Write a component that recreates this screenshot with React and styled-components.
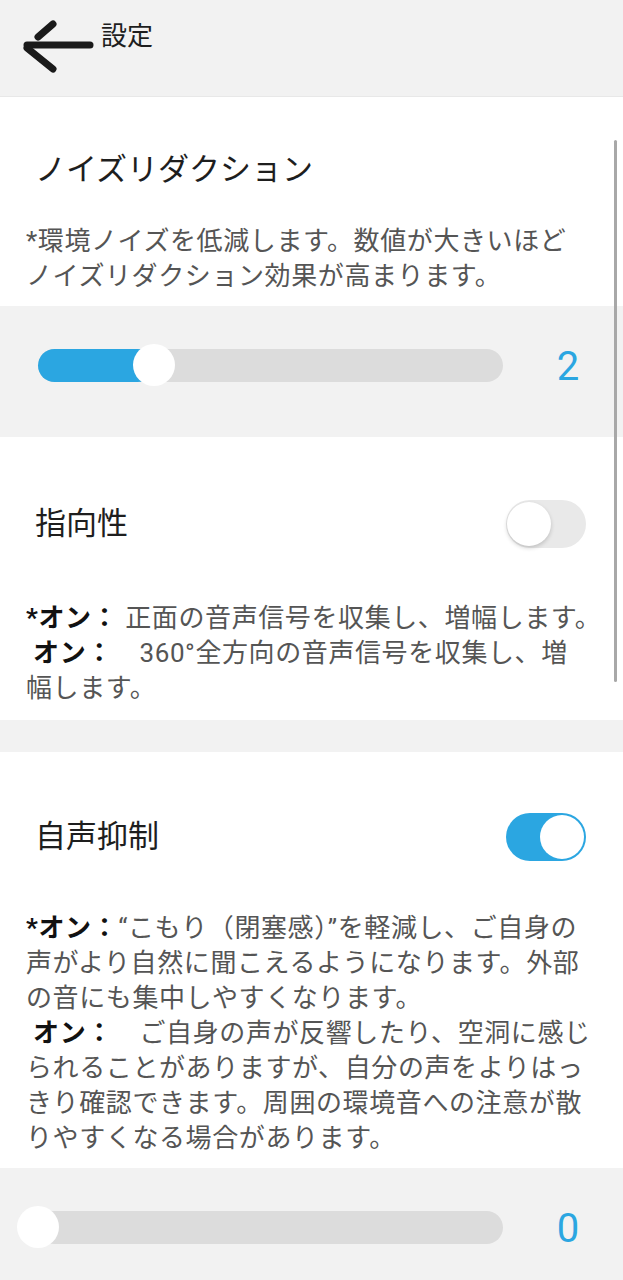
import { useState } from "react"
import styled, { createGlobalStyle } from "styled-components"

const GlobalStyle = createGlobalStyle`
  body {
    margin: 0;
    background: #f2f2f2;
    font-family: Roboto, "Noto Sans CJK JP", sans-serif;
  }
`

const Page = styled.div`
  position: relative;
  width: 623px;
  overflow: hidden;
`

const Header = styled.div`
  display: flex;
  align-items: flex-start;
  height: 97px;
  padding: 18px 0 0 20px;
  box-sizing: border-box;
  background: #f2f2f2;
  border-bottom: 1px solid #e8e8e8;
`

const BackIcon = styled.svg`
  width: 75px;
  height: 56px;
  flex-shrink: 0;
`

const HeaderTitle = styled.span`
  margin: 5px 0 0 6px;
  font-size: 26px;
  line-height: 1;
  color: #1e1e1e;
`

const Section = styled.div`
  background: #fff;
  padding: ${(p) => p.$top}px 20px ${(p) => p.$bottom}px 26px;
  margin-top: ${(p) => p.$gap || 0}px;
`

const Title = styled.div`
  margin-left: 9px;
  font-size: 31px;
  line-height: 40px;
  color: #1e1e1e;
`

const TitleRow = styled.div`
  display: flex;
  align-items: center;
  justify-content: space-between;
  height: 48px;
  padding-right: 17px;
`

const Desc = styled.div`
  margin-top: ${(p) => p.$gap}px;
  font-size: 26px;
  line-height: 35px;
  letter-spacing: 0.6px;
  color: #555;
`

const Para = styled.p`
  margin: 0;
`

const Label = styled.b`
  color: #111;
  font-weight: 700;
`

const Band = styled.div`
  display: flex;
  align-items: center;
  padding: 41px 25px 54px 38px;
  background: #f2f2f2;
`

const Track = styled.div`
  position: relative;
  width: 465px;
  height: 33px;
  border-radius: 17px;
  background: #dcdcdc;
`

const Fill = styled.div`
  height: 100%;
  border-radius: 17px;
  background: #2ba6e1;
`

const Thumb = styled.div`
  position: absolute;
  top: 50%;
  width: 42px;
  height: 42px;
  border-radius: 50%;
  background: #fff;
  transform: translate(-50%, -50%);
`

const Value = styled.div`
  margin-left: auto;
  width: 60px;
  padding-top: 3px;
  text-align: center;
  font-family: Roboto, sans-serif;
  font-size: 40px;
  line-height: 33px;
  color: #2ba6e1;
`

const SwitchTrack = styled.button`
  position: relative;
  width: 80px;
  height: 48px;
  padding: 0;
  border: none;
  border-radius: 24px;
  background: ${(p) => (p.$on ? "#2ba6e1" : "#e9e9e9")};
  cursor: pointer;
`

const SwitchKnob = styled.span`
  position: absolute;
  top: 2px;
  left: ${(p) => (p.$on ? "34px" : "1px")};
  width: 44px;
  height: 44px;
  border-radius: 50%;
  background: #fff;
  box-shadow: ${(p) => (p.$on ? "none" : "0 2px 4px rgba(0, 0, 0, 0.18)")};
`

const ScrollIndicator = styled.div`
  position: absolute;
  top: 140px;
  right: 6px;
  width: 3px;
  height: 542px;
  border-radius: 2px;
  background: #a8a8a8;
`

function Slider({ value, max }) {
  const pct = (value / max) * 100
  return (
    <Band>
      <Track>
        <Fill style={{ width: `${pct}%` }} />
        <Thumb style={{ left: `${pct}%` }} />
      </Track>
      <Value>{value}</Value>
    </Band>
  )
}

function Switch({ on, onToggle }) {
  return (
    <SwitchTrack $on={on} onClick={onToggle}>
      <SwitchKnob $on={on} />
    </SwitchTrack>
  )
}

export default function App() {
  const [directional, setDirectional] = useState(false)
  const [ownVoice, setOwnVoice] = useState(true)

  return (
    <Page>
      <GlobalStyle />
      <Header>
        <BackIcon viewBox="0 0 75 56" fill="none" stroke="#1a1a1a" strokeWidth="7" strokeLinecap="round">
          <path d="M7 27 L70 27" />
          <path d="M7 30 L33 51" />
          <path d="M18 19 L33 6" />
        </BackIcon>
        <HeaderTitle>設定</HeaderTitle>
      </Header>

      <Section $top={53} $bottom={12}>
        <Title>ノイズリダクション</Title>
        <Desc $gap={34}>
          *環境ノイズを低減します。数値が大きいほど
          <br />
          ノイズリダクション効果が高まります。
        </Desc>
      </Section>
      <Slider value={2} max={8} />

      <Section $top={63} $bottom={14}>
        <TitleRow>
          <Title>指向性</Title>
          <Switch on={directional} onToggle={() => setDirectional(!directional)} />
        </TitleRow>
        <Desc $gap={53}>
          <Para>
            <Label>*オン：</Label> 正面の音声信号を収集し、増幅します。
          </Para>
          <Para>
            &nbsp;<Label>オン：</Label>　360°全方向の音声信号を収集し、増
            <br />
            幅します。
          </Para>
        </Desc>
      </Section>

      <Section $top={61} $bottom={12} $gap={32}>
        <TitleRow>
          <Title>自声抑制</Title>
          <Switch on={ownVoice} onToggle={() => setOwnVoice(!ownVoice)} />
        </TitleRow>
        <Desc $gap={50}>
          <Para>
            <Label>*オン：</Label>“こもり（閉塞感）”を軽減し、ご自身の
            <br />
            声がより自然に聞こえるようになります。外部
            <br />
            の音にも集中しやすくなります。
          </Para>
          <Para>
            &nbsp;<Label>オン：</Label>　ご自身の声が反響したり、空洞に感じ
            <br />
            られることがありますが、自分の声をよりはっ
            <br />
            きり確認できます。周囲の環境音への注意が散
            <br />
            りやすくなる場合があります。
          </Para>
        </Desc>
      </Section>
      <Slider value={0} max={8} />

      <ScrollIndicator />
    </Page>
  )
}
